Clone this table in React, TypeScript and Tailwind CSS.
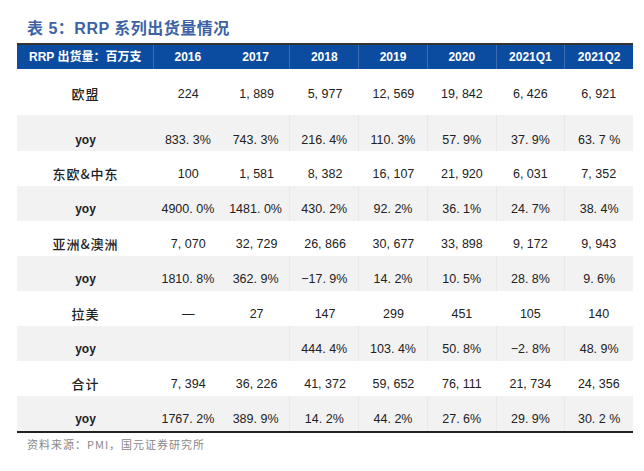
import React from 'react';

const years = ['2016', '2017', '2018', '2019', '2020', '2021Q1', '2021Q2'];

type Row = { label: string; yoy?: boolean; cells: string[] };

const rows: Row[] = [
  { label: '欧盟', cells: ['224', '1, 889', '5, 977', '12, 569', '19, 842', '6, 426', '6, 921'] },
  { label: 'yoy', yoy: true, cells: ['833. 3%', '743. 3%', '216. 4%', '110. 3%', '57. 9%', '37. 9%', '63. 7 %'] },
  { label: '东欧&中东', cells: ['100', '1, 581', '8, 382', '16, 107', '21, 920', '6, 031', '7, 352'] },
  { label: 'yoy', yoy: true, cells: ['4900. 0%', '1481. 0%', '430. 2%', '92. 2%', '36. 1%', '24. 7%', '38. 4%'] },
  { label: '亚洲&澳洲', cells: ['7, 070', '32, 729', '26, 866', '30, 677', '33, 898', '9, 172', '9, 943'] },
  { label: 'yoy', yoy: true, cells: ['1810. 8%', '362. 9%', '−17. 9%', '14. 2%', '10. 5%', '28. 8%', '9. 6%'] },
  { label: '拉美', cells: ['—', '27', '147', '299', '451', '105', '140'] },
  { label: 'yoy', yoy: true, cells: ['', '', '444. 4%', '103. 4%', '50. 8%', '−2. 8%', '48. 9%'] },
  { label: '合计', cells: ['7, 394', '36, 226', '41, 372', '59, 652', '76, 111', '21, 734', '24, 356'] },
  { label: 'yoy', yoy: true, cells: ['1767. 2%', '389. 9%', '14. 2%', '44. 2%', '27. 6%', '29. 9%', '30. 2 %'] },
];

export default function App() {
  return (
    <div className="w-[644px] h-[471px] bg-white font-['Liberation_Sans','Noto_Sans_CJK_SC',sans-serif]">
      <div className="pt-[19px] pl-[27px] text-[16px] leading-[20px] font-bold text-[#3d62a5] tracking-[0.5px]">
        表 5：RRP 系列出货量情况
      </div>

      <div className="ml-[17px] mt-[4px] w-[616px] border-t-2 border-[#333333]">
        {/* header */}
        <div className="flex h-[24px] bg-[#0c4ca0] text-white text-[12px] font-bold items-center">
          <div className="w-[137px] h-full flex items-center pl-[12px] border-r border-[#3c6db4]">
            RRP 出货量：百万支
          </div>
          {years.map((y, i) => (
            <div
              key={y}
              className={
                'flex-1 h-full flex items-center justify-center ' +
                (i > 0 && i < 6 ? 'border-r border-[#3c6db4]' : '')
              }
            >
              {y}
            </div>
          ))}
        </div>

        {rows.map((r, ri) => (
          <div
            key={ri}
            className={
              'flex text-[12.5px] leading-[16px] text-[#222] ' +
              (ri === 0 ? 'h-[46px] ' : ri === 1 ? 'h-[36px] ' : 'h-[35px] ') +
              (r.yoy ? 'bg-[#f2f2f2]' : 'bg-white')
            }
          >
            <div
              className={
                'w-[137px] text-center ' +
                (ri === 0 ? 'pt-[17px] ' : ri === 1 ? 'pt-[17px] ' : 'pt-[15px] ') +
                (r.yoy
                  ? 'font-bold text-[12px] text-[#222]'
                  : "font-medium text-[13px] tracking-[1px] font-['Noto_Sans_CJK_SC',sans-serif] text-[#222]")
              }
            >
              {r.label}
            </div>
            {r.cells.map((c, ci) => (
              <div
                key={ci}
                className={
                  'flex-1 text-center ' +
                  (ri === 0 ? 'pt-[17px] ' : ri === 1 ? 'pt-[17px] ' : 'pt-[15px] ') +
                  (r.yoy && ci > 0 && ci < 6 ? 'border-r border-[#e8e8e8]' : '')
                }
              >
                {c}
              </div>
            ))}
          </div>
        ))}

        <div className="border-t-2 border-[#222]" />
      </div>

      <div className="pl-[27px] mt-[4px] text-[11px] leading-[14px] text-[#888] tracking-[1px] font-['Noto_Sans_CJK_SC',sans-serif]">
        资料来源：PMI，国元证券研究所
      </div>
    </div>
  );
}
